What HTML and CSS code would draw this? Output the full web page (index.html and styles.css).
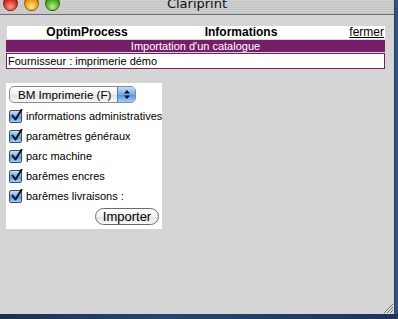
FILE: index.html
```html
<!DOCTYPE html>
<html>
<head>
<meta charset="utf-8">
<link rel="stylesheet" href="styles.css">
</head>
<body>
<div class="screen">
  <div class="window">
    <div class="titlebar">
      <div class="lights">
        <span class="light red"></span>
        <span class="light yellow"></span>
        <span class="light green"></span>
      </div>
      <div class="title">Clariprint</div>
    </div>
    <div class="content">
      <div class="header">
        <div class="hcell">OptimProcess</div>
        <div class="hcell">Informations</div>
        <div class="hcell right"><a class="close">fermer</a></div>
      </div>
      <div class="banner">Importation d'un catalogue</div>
      <div class="supplier">Fournisseur : imprimerie démo</div>
      <div class="panel">
        <div class="popup">
          <span class="popup-label">BM Imprimerie (F)</span>
          <span class="popup-arrows">
            <svg width="8" height="11" viewBox="0 0 8 11"><path d="M4 1 L7 4.5 H1 Z M4 10 L7 6.5 H1 Z" fill="#111"/></svg>
          </span>
        </div>
        <label class="row"><span class="cb"><svg width="13" height="13" viewBox="0 0 13 13"><path d="M2.5 6.5 L5.5 10.5 L11.5 0.8" stroke="#111" stroke-width="2" fill="none" stroke-linecap="round" stroke-linejoin="round"/></svg></span>informations administratives</label>
        <label class="row"><span class="cb"><svg width="13" height="13" viewBox="0 0 13 13"><path d="M2.5 6.5 L5.5 10.5 L11.5 0.8" stroke="#111" stroke-width="2" fill="none" stroke-linecap="round" stroke-linejoin="round"/></svg></span>paramètres généraux</label>
        <label class="row"><span class="cb"><svg width="13" height="13" viewBox="0 0 13 13"><path d="M2.5 6.5 L5.5 10.5 L11.5 0.8" stroke="#111" stroke-width="2" fill="none" stroke-linecap="round" stroke-linejoin="round"/></svg></span>parc machine</label>
        <label class="row"><span class="cb"><svg width="13" height="13" viewBox="0 0 13 13"><path d="M2.5 6.5 L5.5 10.5 L11.5 0.8" stroke="#111" stroke-width="2" fill="none" stroke-linecap="round" stroke-linejoin="round"/></svg></span>barêmes encres</label>
        <label class="row"><span class="cb"><svg width="13" height="13" viewBox="0 0 13 13"><path d="M2.5 6.5 L5.5 10.5 L11.5 0.8" stroke="#111" stroke-width="2" fill="none" stroke-linecap="round" stroke-linejoin="round"/></svg></span>barêmes livraisons :</label>
        <div class="actions"><button class="btn">Importer</button></div>
      </div>
      <div class="grip">
        <svg width="10" height="10" viewBox="0 0 10 10"><path d="M10 1 L1 10 M10 4 L4 10 M10 7 L7 10" stroke="#777" stroke-width="1" fill="none"/></svg>
      </div>
    </div>
  </div>
  <div class="edge"></div>
</div>
<div class="desk-bottom"></div>
</body>
</html>
```

FILE: styles.css
```css
html, body {
  margin: 0;
  padding: 0;
  width: 398px;
  height: 319px;
  overflow: hidden;
  background: #1f3c64;
  font-family: "Liberation Sans", Arial, sans-serif;
  font-size: 11px;
  color: #000;
}

.screen {
  display: flex;
  height: 314px;
}

.window {
  width: 394px;
  display: flex;
  flex-direction: column;
  background: #d5d5d5;
}

.edge {
  width: 4px;
  background: linear-gradient(to right, #2b3f58 0 1px, #2f5482 1px);
}

.desk-bottom {
  height: 5px;
  background: linear-gradient(to right, #1c304d, #27466f 40%, #1d3556);
}

.titlebar {
  height: 14px;
  border-bottom: 1px solid #6e6e6e;
  background: repeating-linear-gradient(to bottom, #cfcfcf 0 1px, #c4c4c4 1px 2px);
  position: relative;
  overflow: hidden;
}

.lights {
  position: absolute;
  left: 3px;
  top: -4px;
  display: flex;
  gap: 6px;
}

.light {
  width: 15px;
  height: 15px;
  border-radius: 50%;
  box-sizing: border-box;
  border: 1px solid rgba(0,0,0,0.35);
}
.red { background: radial-gradient(circle at 50% 75%, #ff9a8a, #d22b1e 60%, #8f140c); }
.yellow { background: radial-gradient(circle at 50% 75%, #ffe28a, #e79a12 60%, #9a5a06); }
.green { background: radial-gradient(circle at 50% 75%, #b8f08c, #4aa61f 60%, #25620b); }

.title {
  text-align: center;
  font-family: "DejaVu Sans", sans-serif;
  font-size: 13px;
  line-height: 14px;
  margin-top: -3px;
  color: #111;
}

.content {
  flex: 1;
  padding: 11px 9px 0 6px;
  display: flex;
  flex-direction: column;
  position: relative;
}

.header {
  margin-left: 1px;
  height: 13px;
  background: #fff;
  display: grid;
  grid-template-columns: 160px 148px 1fr;
  line-height: 13px;
  font-weight: bold;
  font-size: 12px;
}

.hcell { text-align: center; }
.hcell.right { text-align: right; padding-right: 1px; font-weight: normal; }
.close { text-decoration: underline; color: #000; }

.banner {
  height: 12px;
  background: #761f68;
  color: #fff;
  text-align: center;
  line-height: 12px;
  font-size: 11px;
  margin-top: 1px;
}

.supplier {
  margin-top: 1px;
  height: 14px;
  border: 1px solid #761f68;
  background: #fff;
  line-height: 14px;
  padding-left: 1px;
  font-size: 11px;
}

.panel {
  margin-top: 14px;
  width: 156px;
  height: 146px;
  box-sizing: border-box;
  background: #fff;
  padding: 3px 3px 0 3px;
  display: flex;
  flex-direction: column;
}

.popup {
  width: 127px;
  height: 17px;
  box-sizing: border-box;
  border: 1px solid #8c8c8c;
  border-radius: 5px;
  background: linear-gradient(to bottom, #fff, #f0f0f0 50%, #e2e2e2 51%, #f7f7f7);
  display: flex;
  align-items: center;
  overflow: hidden;
  margin-bottom: 3px;
}

.popup-label {
  flex: 1;
  padding-left: 8px;
  font-size: 11.6px;
  line-height: 15px;
}

.popup-arrows {
  width: 17px;
  height: 15px;
  display: flex;
  align-items: center;
  justify-content: center;
  background: linear-gradient(to bottom, #c5dcf6, #74aaea 50%, #4d8fe0 51%, #9fd0fb);
  border-left: 1px solid #5a7fb0;
}

.row {
  display: flex;
  align-items: center;
  height: 20px;
  gap: 4px;
  font-size: 11px;
  white-space: nowrap;
}

.cb {
  width: 13px;
  height: 13px;
  box-sizing: border-box;
  border: 1px solid #3a4c6e;
  border-radius: 2px;
  background: linear-gradient(to bottom, #c9e0f8, #6fa7ea 50%, #4a8ce0 51%, #a6d4fc);
  position: relative;
  flex: none;
}
.cb svg { position: absolute; left: 0; top: -2px; }

.actions {
  display: flex;
  justify-content: flex-end;
  margin-top: 2px;
}

.btn {
  width: 64px;
  height: 17px;
  border: 1px solid #6b6b6b;
  border-radius: 9px;
  background: linear-gradient(to bottom, #ffffff, #f2f2f2 50%, #e0e0e0 51%, #fafafa);
  font-family: "Liberation Sans", Arial, sans-serif;
  font-size: 13px;
  line-height: 15px;
  padding: 0;
  color: #000;
}

.grip {
  position: absolute;
  right: 1px;
  bottom: 1px;
  width: 10px;
  height: 10px;
}
```
